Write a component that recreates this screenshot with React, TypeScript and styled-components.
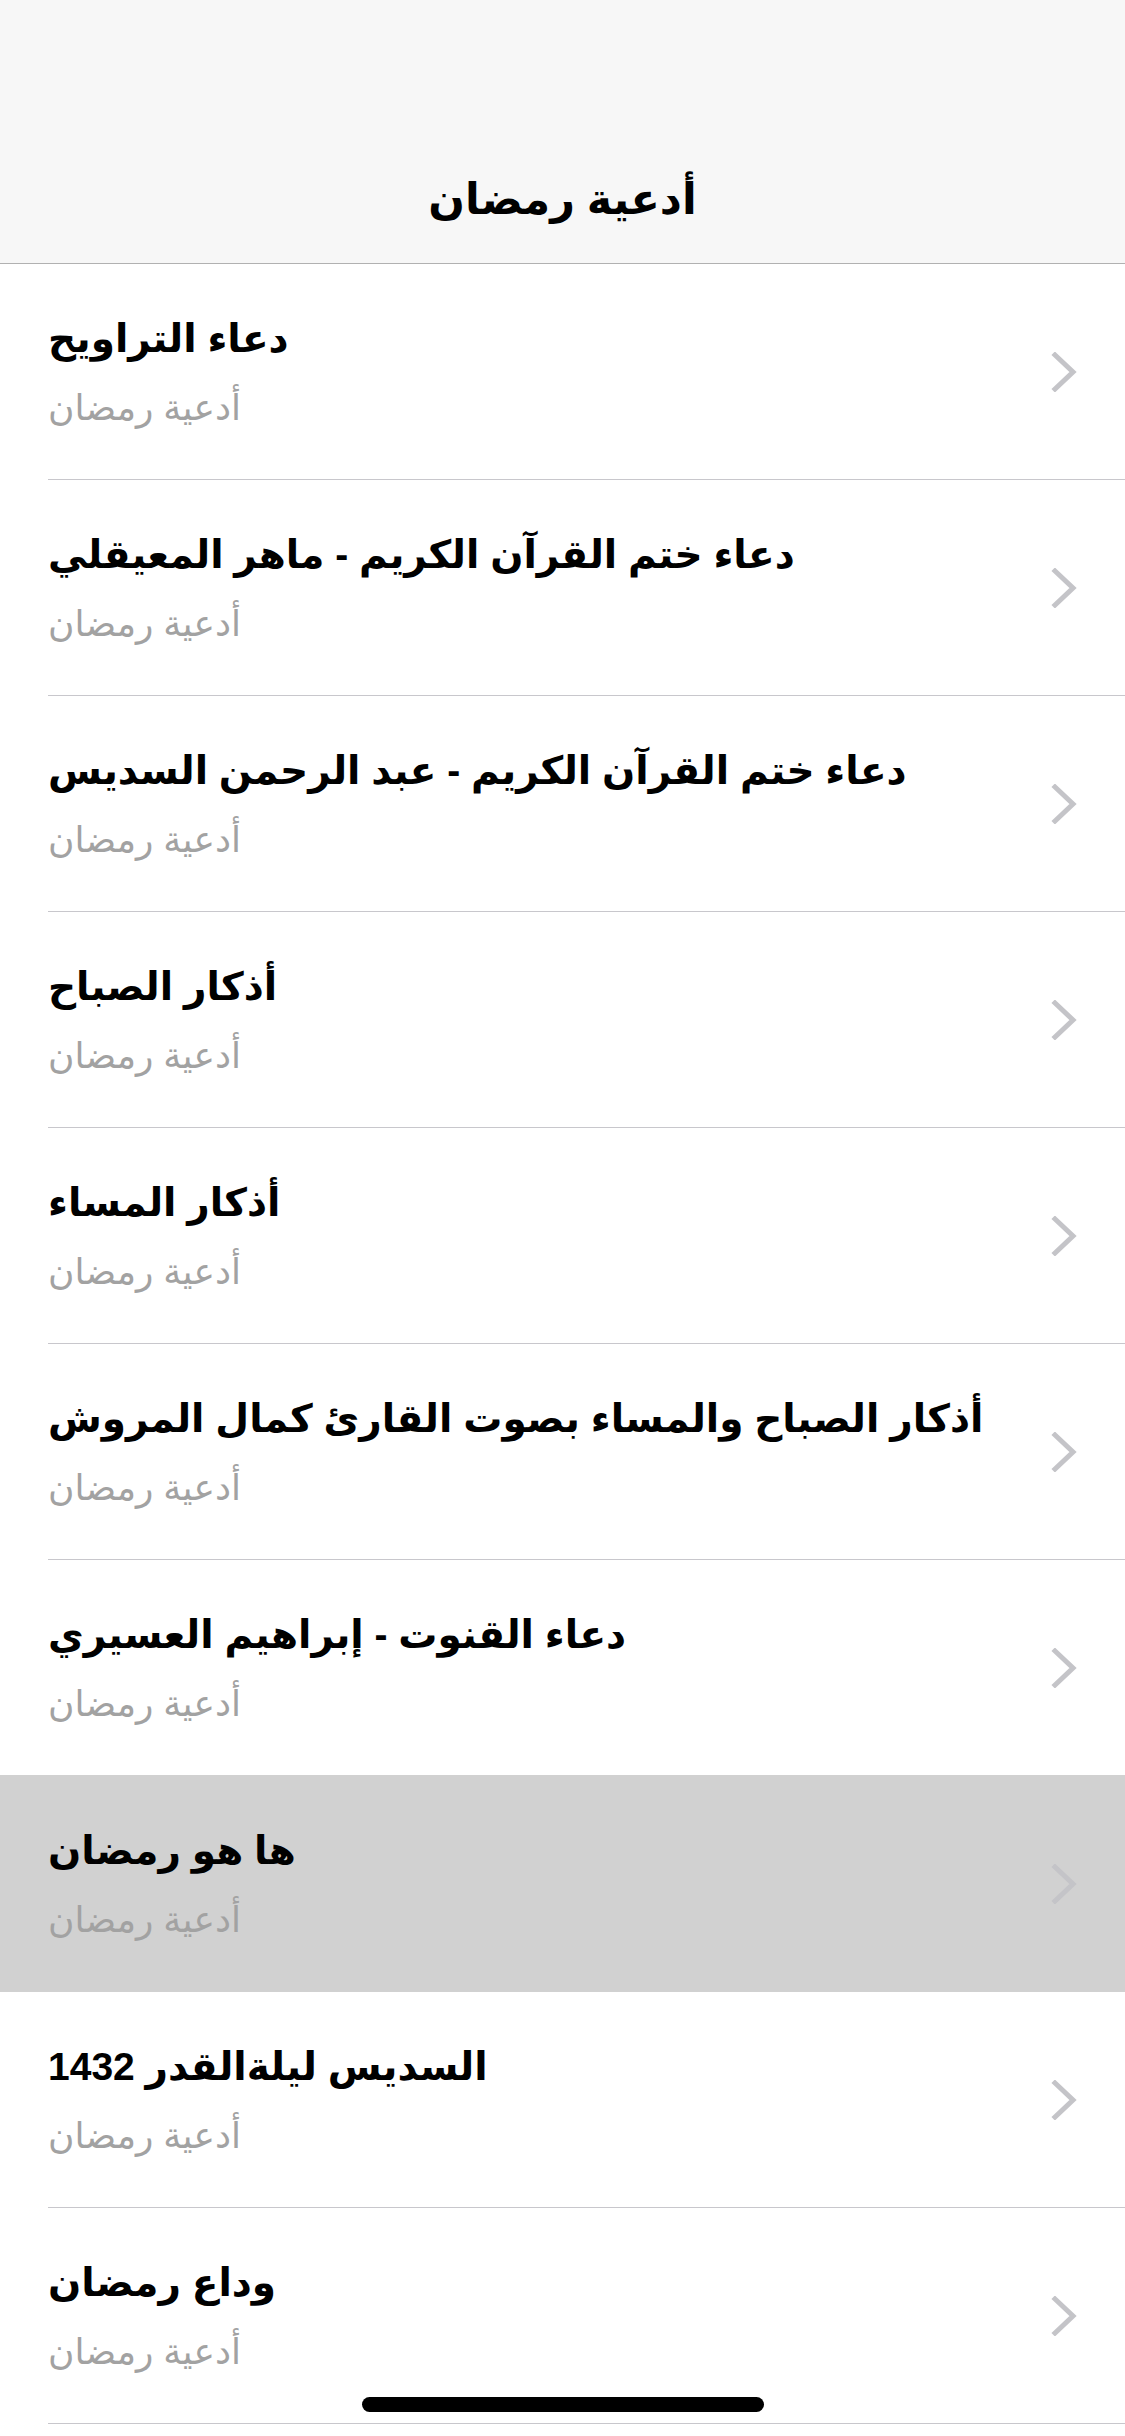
import React from "react";
import styled, { createGlobalStyle } from "styled-components";

const GlobalStyle = createGlobalStyle`
  html, body {
    margin: 0;
    padding: 0;
    background: #ffffff;
  }
  body {
    font-family: "Liberation Sans", "DejaVu Sans", sans-serif;
    -webkit-font-smoothing: antialiased;
  }
  * { box-sizing: border-box; }
`;

const Screen = styled.div`
  width: 1125px;
  min-height: 2436px;
  background: #ffffff;
  position: relative;
  overflow: hidden;
`;

const NavBar = styled.header`
  height: 264px;
  background: #f7f7f7;
  border-bottom: 1px solid #b1b1b1;
  display: flex;
  align-items: flex-end;
  justify-content: center;
  padding-bottom: 19px;
`;

const NavTitle = styled.h1`
  margin: 0;
  font-family: "Liberation Sans", "DejaVu Sans", sans-serif;
  font-weight: 700;
  font-size: 43px;
  line-height: 90px;
  color: #000000;
  direction: rtl;
`;

const List = styled.ul`
  list-style: none;
  margin: 0;
  padding: 0;
`;

const Row = styled.li<{ $highlighted?: boolean }>`
  background: ${(p) => (p.$highlighted ? "#d1d1d1" : "#ffffff")};
  padding-left: 48px;
  margin-top: ${(p) => (p.$highlighted ? "-1px" : "0")};
  padding-top: ${(p) => (p.$highlighted ? "1px" : "0")};
`;

const RowInner = styled.div<{ $highlighted?: boolean }>`
  height: 216px;
  display: flex;
  align-items: center;
  padding-right: 48px;
  border-bottom: 1px solid ${(p) => (p.$highlighted ? "#d1d1d1" : "#c8c7cc")};
`;

const TextCol = styled.div`
  flex: 1;
  min-width: 0;
  display: flex;
  flex-direction: column;
  gap: 13px;
  direction: rtl;
  text-align: left;
  align-items: flex-end;
`;

const Title = styled.div`
  font-family: "Liberation Sans", "DejaVu Sans", sans-serif;
  font-weight: 700;
  font-size: 39px;
  line-height: 60px;
  color: #000000;
  white-space: nowrap;
`;

const Subtitle = styled.div`
  font-family: "Liberation Sans", "DejaVu Sans", sans-serif;
  font-weight: 400;
  font-size: 36px;
  line-height: 52px;
  color: #a2a2a2;
  white-space: nowrap;
`;

const Chevron = styled.svg`
  width: 26px;
  height: 40px;
  flex: none;
`;

const HomeIndicator = styled.div`
  position: absolute;
  left: 362px;
  top: 2397px;
  width: 402px;
  height: 15px;
  border-radius: 8px;
  background: #000000;
`;

const items = [
  "دعاء التراويح",
  "دعاء ختم القرآن الكريم - ماهر المعيقلي",
  "دعاء ختم القرآن الكريم - عبد الرحمن السديس",
  "أذكار الصباح",
  "أذكار المساء",
  "أذكار الصباح والمساء بصوت القارئ كمال المروش",
  "دعاء القنوت - إبراهيم العسيري",
  "ها هو رمضان",
  "السديس ليلةالقدر 1432",
  "وداع رمضان",
];

export default function App() {
  return (
    <>
      <GlobalStyle />
      <Screen>
        <NavBar>
          <NavTitle>أدعية رمضان</NavTitle>
        </NavBar>
        <List>
          {items.map((t, i) => {
            const hl = i === 7;
            return (
              <Row key={i} $highlighted={hl}>
                <RowInner $highlighted={hl}>
                  <TextCol>
                    <Title>{t}</Title>
                    <Subtitle>أدعية رمضان</Subtitle>
                  </TextCol>
                  <Chevron viewBox="0 0 26 40">
                    <path
                      d="M4 3 L22 20 L4 37"
                      fill="none"
                      stroke="#c4c4c8"
                      strokeWidth="5"
                      strokeLinecap="square"
                      strokeLinejoin="miter"
                    />
                  </Chevron>
                </RowInner>
              </Row>
            );
          })}
        </List>
        <HomeIndicator />
      </Screen>
    </>
  );
}
